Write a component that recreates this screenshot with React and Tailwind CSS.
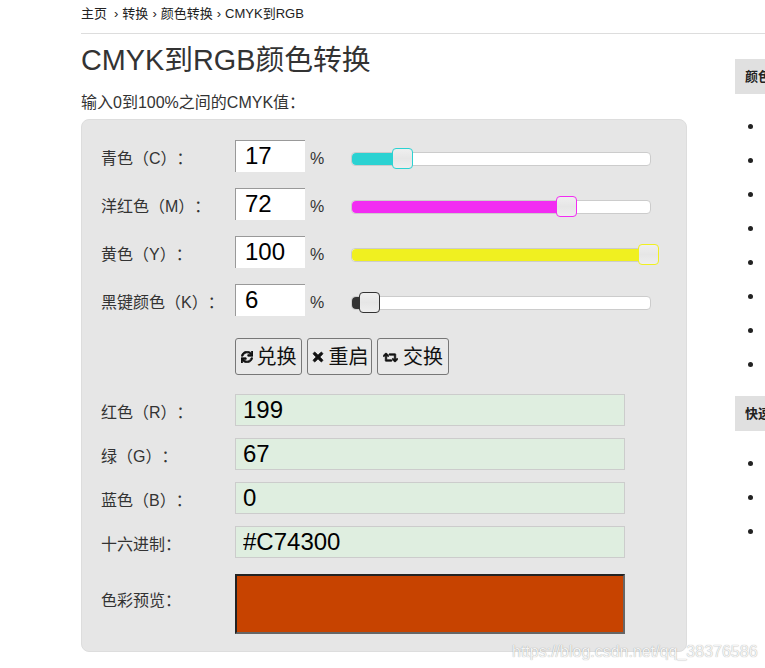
import { FaSync, FaTimes, FaRetweet } from 'react-icons/fa'

const font = 'font-["Liberation_Sans","Noto_Sans_CJK_SC",sans-serif]'

const sliders = [
  { label: '青色\uFF08C\uFF09\uFF1A', value: '17', fill: 17, thumb: 17, track: 'bg-[#2bd2d2]', ring: 'border-[#2bd2d2]' },
  { label: '洋红色\uFF08M\uFF09\uFF1A', value: '72', fill: 72, thumb: 72, track: 'bg-[#f22cf2]', ring: 'border-[#f22cf2]' },
  { label: '黄色\uFF08Y\uFF09\uFF1A', value: '100', fill: 100, thumb: 99.5, track: 'bg-[#f0f020]', ring: 'border-[#f0f020]' },
  { label: '黑键颜色\uFF08K\uFF09\uFF1A', value: '6', fill: 6, thumb: 6, track: 'bg-[#333333]', ring: 'border-[#333333]' },
]

const results = [
  { label: '红色\uFF08R\uFF09\uFF1A', value: '199' },
  { label: '绿\uFF08G\uFF09\uFF1A', value: '67' },
  { label: '蓝色\uFF08B\uFF09\uFF1A', value: '0' },
  { label: '十六进制\uFF1A', value: '#C74300' },
]

function Slider({ fill, thumb, track, ring }) {
  return (
    <div className="relative mt-[6px] ml-[27px] h-[14px] w-[300px] rounded-[4px] border border-[#cccccc] bg-white">
      <div className={`h-full rounded-[4px] ${track}`} style={{ width: `${fill}%` }} />
      <div
        className={`absolute top-[-5px] ml-[-11px] h-[21px] w-[21px] rounded-[4px] border bg-gradient-to-b from-[#efefef] via-[#e6e6e6] to-[#eeeeee] ${ring}`}
        style={{ left: `${thumb}%` }}
      />
    </div>
  )
}

function Button({ icon, width, children }) {
  return (
    <button className={`flex h-[37px] items-center justify-center rounded-[3px] border border-[#777777] bg-[#e9e9e9] pt-[1px] text-[20px] text-[#111111] ${width}`}>
      {icon}
      {children}
    </button>
  )
}

export default function App() {
  return (
    <div className={`relative h-[668px] w-[765px] overflow-hidden bg-white pl-[81px] text-[#333333] [text-spacing-trim:space-all] ${font}`}>
      <div className="flex h-[34px] w-[684px] items-center gap-[4px] border-b border-[#dddddd] pb-[6px] text-[13px] text-[#222222]">
        <span>主页</span>
        <span className="ml-[3px]">›</span>
        <span>转换</span>
        <span>›</span>
        <span>颜色转换</span>
        <span>›</span>
        <span>CMYK到RGB</span>
      </div>

      <div className="flex">
        <div className="w-[606px] shrink-0">
          <h1 className="mt-[9px] h-[34px] text-[28.8px] leading-[34px] font-normal">CMYK到RGB颜色转换</h1>
          <p className="mt-[16px] h-[26px] text-[16px] leading-[20px]">输入0到100%之间的CMYK值{'\uFF1A'}</p>

          <div className="h-[533px] rounded-[8px] border border-[#dddddd] bg-[#e6e6e6] pt-[20px] pl-[19px]">
            {sliders.map((s) => (
              <div key={s.label} className="mb-[16px] flex h-[32px] items-center">
                <label className="w-[134px] pt-[6px] text-[16px]">{s.label}</label>
                <input
                  readOnly
                  value={s.value}
                  className="h-[32px] w-[70px] border-t border-l border-[#999999] bg-white pb-[2px] pl-[9px] text-[24px] text-black outline-none"
                />
                <span className="ml-[5px] pt-[6px] text-[16px]">%</span>
                <Slider {...s} />
              </div>
            ))}

            <div className="mt-[22px] ml-[134px] flex gap-[5px]">
              <Button width="w-[67px] gap-[4px]" icon={<FaSync className="text-[12px] stroke-[30]" />}>兑换</Button>
              <Button width="w-[65px] gap-[4px]" icon={<FaTimes className="text-[14px] stroke-[30]" />}>重启</Button>
              <Button width="w-[72px] gap-[5px]" icon={<FaRetweet className="text-[15px] stroke-[30]" />}>交换</Button>
            </div>

            <div className="mt-[19px]">
              {results.map((r) => (
                <div key={r.label} className="mb-[12px] flex h-[32px] items-center">
                  <label className="w-[134px] pt-[6px] text-[16px]">{r.label}</label>
                  <input
                    readOnly
                    value={r.value}
                    className="h-[32px] w-[390px] border border-[#cccccc] bg-[#dfeee0] pl-[7px] text-[24px] text-black outline-none"
                  />
                </div>
              ))}
            </div>

            <div className="mt-[16px] flex h-[60px] items-center">
              <label className="w-[134px] pb-[6px] text-[16px]">色彩预览{'\uFF1A'}</label>
              <div className="h-[60px] w-[390px] border-2 border-t-[#222222] border-r-[#666666] border-b-[#666666] border-l-[#222222] bg-[#c74300]" />
            </div>
          </div>
        </div>

        <aside className="ml-[48px] w-[300px] shrink-0 pt-[25px] text-[#222222]">
          <h3 className="h-[35px] bg-[#e0e0e0] pl-[10px] text-[13px] leading-[35px] font-bold">颜色转换工具</h3>
          <ul className="mt-[15px] mb-[15px] list-disc pl-[29px] indent-px text-[16px] leading-[34px]">
            <li>黄色</li>
            <li>十六进制</li>
            <li>色彩</li>
            <li>红色</li>
            <li>绿色</li>
            <li>蓝色</li>
            <li>青色</li>
            <li>黑色</li>
          </ul>
          <h3 className="h-[35px] bg-[#e0e0e0] pl-[10px] text-[13px] leading-[35px] font-bold">快速链接</h3>
          <ul className="mt-[15px] list-disc pl-[29px] indent-px text-[16px] leading-[34px]">
            <li>主页</li>
            <li>转换</li>
            <li>颜色</li>
          </ul>
        </aside>
      </div>

      <div className="absolute top-[640px] left-[512px] text-[16px] text-[#f4f4f4] [text-shadow:0_0_1px_rgba(0,0,0,0.4)]">
        https://blog.csdn.net/qq_38376586
      </div>
    </div>
  )
}
